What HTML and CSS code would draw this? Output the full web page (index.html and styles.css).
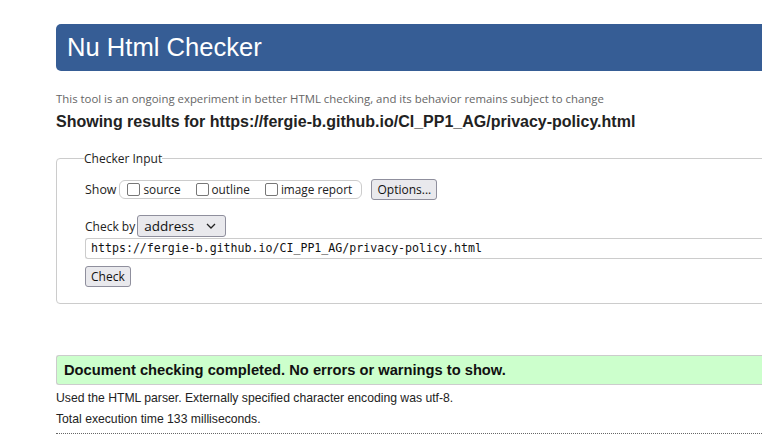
FILE: index.html
```html
<!DOCTYPE html>
<html lang="en">
<head>
<meta charset="utf-8">
<title>Nu Html Checker</title>
<link rel="stylesheet" href="styles.css">
</head>
<body>
<div class="page">
  <h1 class="banner">Nu Html Checker</h1>
  <p class="intro">This tool is an ongoing experiment in better HTML checking, and its behavior remains subject to change</p>
  <h2 class="results-title">Showing results for https://fergie-b.github.io/CI_PP1_AG/privacy-policy.html</h2>
  <fieldset class="input-set">
    <legend class="legend">Checker Input</legend>
    <div class="row show-row">
      <span class="label show-label">Show</span>
      <span class="opts">
        <label class="opt"><span class="box"></span>source</label>
        <label class="opt"><span class="box"></span>outline</label>
        <label class="opt"><span class="box"></span>image report</label>
      </span>
      <button class="btn options">Options...</button>
    </div>
    <div class="row by-row">
      <span class="label">Check by</span>
      <span class="select">address<svg class="chev" width="10" height="6" viewBox="0 0 10 6"><path d="M1 1l4 4 4-4" fill="none" stroke="#222" stroke-width="1.3"/></svg></span>
    </div>
    <div class="url">https://fergie-b.github.io/CI_PP1_AG/privacy-policy.html</div>
    <button class="btn check">Check</button>
  </fieldset>
  <div class="success">Document checking completed. No errors or warnings to show.</div>
  <p class="info">Used the HTML parser. Externally specified character encoding was utf-8.</p>
  <p class="info">Total execution time 133 milliseconds.</p>
  <div class="rule"></div>
</div>
</body>
</html>
```
FILE: styles.css
```css
html { overflow: hidden; }
body {
  margin: 0;
  background: #fff;
  font-family: "Liberation Sans", Arial, sans-serif;
  color: #222;
}
.page {
  width: 760px;
  padding: 24px 0 0 56px;
}
.banner {
  margin: 0;
  height: 47px;
  box-sizing: border-box;
  background: #365d95;
  color: #fff;
  border-radius: 5px;
  font-weight: normal;
  font-size: 25.6px;
  line-height: 47px;
  padding-left: 11px;
}
.intro {
  margin: 20px 0 0;
  font-family: "Open Sans", "Noto Sans", sans-serif;
  font-size: 11.4px;
  color: #666;
  line-height: 16px;
}
.results-title {
  margin: 5px 0 0;
  font-size: 16px;
  font-weight: bold;
  color: #222;
  line-height: 20px;
}
.input-set {
  margin: 18px 0 0;
  border: 1px solid #ccc;
  border-radius: 4px;
  padding: 8px 0 16px 28px;
  font-family: "Open Sans", "Noto Sans", sans-serif;
  font-size: 12px;
  color: #222;
}
.legend {
  margin-left: -1px;
  padding: 0;
  font-size: 12px;
}
.row {
  display: flex;
  align-items: center;
}
.show-row { height: 22px; margin-top: 3px; }
.label { margin-right: 2px; }
.show-label { margin-right: 3px; font-size: 12.4px; }
.opts {
  display: flex;
  align-items: center;
  height: 19px;
  box-sizing: border-box;
  border: 1px solid #ccc;
  border-radius: 6px;
  padding: 0 4px 0 7px;
  width: 243px;
  font-size: 11.8px;
}
.opt {
  display: flex;
  align-items: center;
  margin-right: 15px;
}
.opt:last-child { margin-right: 0; }
.box {
  width: 13px;
  height: 13px;
  border: 1px solid #777;
  border-radius: 2px;
  margin-right: 3px;
  box-sizing: border-box;
}
.btn {
  font-family: "Open Sans", "Noto Sans", sans-serif;
  font-size: 12px;
  color: #111;
  background: #e9e9ed;
  border: 1px solid #8f8f9d;
  border-radius: 3px;
  padding: 0 5px;
  height: 21px;
}
.options { margin-left: 9px; }
.by-row { margin-top: 15px; }
.select {
  display: flex;
  align-items: center;
  justify-content: space-between;
  box-sizing: border-box;
  width: 89px;
  height: 22px;
  border: 1px solid #8f8f9d;
  border-radius: 3px;
  background: #e9e9ed;
  padding: 0 9px 0 6px;
  font-size: 13.5px;
  color: #111;
}
.url {
  margin-top: 1px;
  height: 21px;
  box-sizing: border-box;
  border: 1px solid #ccc;
  border-right: 0;
  border-radius: 3px 0 0 3px;
  padding-left: 5px;
  font-family: "DejaVu Sans Mono", "Liberation Mono", monospace;
  font-size: 11.6px;
  line-height: 19px;
  color: #111;
}
.check { margin-top: 7px; display: block; }
.success {
  margin-top: 51px;
  height: 30px;
  box-sizing: border-box;
  background: #ccffcc;
  border: 1px solid #ccc;
  border-right: 0;
  border-radius: 3px 0 0 3px;
  padding-left: 7px;
  font-weight: bold;
  font-size: 14.7px;
  line-height: 28px;
  color: #111;
}
.info {
  margin: 5px 0 0;
  font-size: 12.2px;
  line-height: 16px;
  color: #222;
}
.rule {
  margin-top: 6px;
  border-top: 1px dotted #666;
}
```
